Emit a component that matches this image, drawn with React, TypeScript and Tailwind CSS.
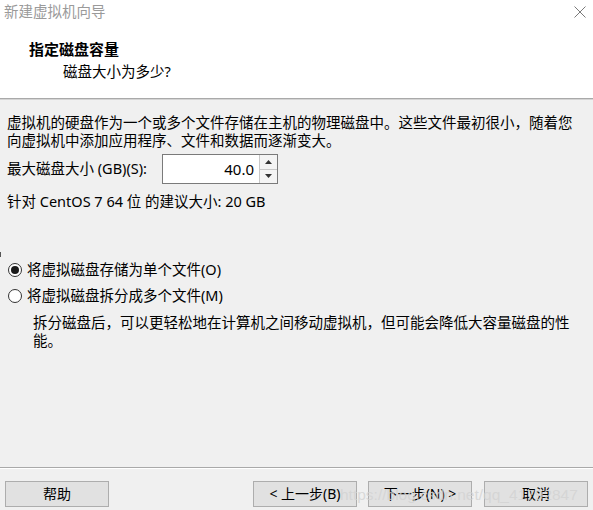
import React from 'react';

// New VM wizard: disk capacity page

const font = "font-['Noto_Sans','Noto_Sans_CJK_SC',sans-serif]";

const WizButton: React.FC<{ label: React.ReactNode; className?: string }> = ({ label, className }) => (
  <button
    className={`w-[104px] h-[26px] bg-[#e1e1e1] border border-[#adadad] text-[14px] text-black leading-none flex items-center justify-center ${className ?? ''}`}
  >
    {label}
  </button>
);

const Radio: React.FC<{ checked?: boolean; label: string }> = ({ checked, label }) => (
  <div className="flex items-center h-[22px]">
    <span className="ml-[8px] w-[14px] h-[14px] rounded-full border border-[#333] bg-white flex items-center justify-center">
      {checked && <span className="w-[8px] h-[8px] rounded-full bg-[#1a1a1a]" />}
    </span>
    <span className="ml-[5px]">{label}</span>
  </div>
);

export default function App() {
  return (
    <div className={`relative w-[593px] h-[510px] bg-[#f0f0f0] overflow-hidden flex flex-col text-[14.5px] text-black ${font}`}>
      {/* title + header */}
      <div className="h-[98px] bg-white flex flex-col">
        <div className="h-[24px] flex items-center justify-between pl-[4px] pr-[7px]">
          <span className="text-[#9a9a9a] text-[14.5px]">新建虚拟机向导</span>
          <svg width="12" height="12" viewBox="0 0 12 12" className="text-[#7a7a7a]">
            <path d="M0.5 0.5 L11.5 11.5 M11.5 0.5 L0.5 11.5" stroke="currentColor" strokeWidth="1" />
          </svg>
        </div>
        <div className="mt-[14px] pl-[29px] font-bold leading-[22px] text-[15px]">指定磁盘容量</div>
        <div className="pl-[63px] leading-[22px] text-[14.5px]">磁盘大小为多少?</div>
      </div>
      <div className="h-[1px] bg-[#a9a9a9]" />
      <div className="h-[1px] bg-[#d4d4d4]" />

      {/* body */}
      <div className="flex-1 flex flex-col px-[7px]">
        <p className="mt-[13px] leading-[18px]">
          虚拟机的硬盘作为一个或多个文件存储在主机的物理磁盘中。这些文件最初很小，随着您
          <br />
          向虚拟机中添加应用程序、文件和数据而逐渐变大。
        </p>

        <div className="mt-[5px] flex items-center h-[30px]">
          <span className="w-[155px]">最大磁盘大小 (GB)(S):</span>
          <div className="flex h-[30px] border border-[#7a7a7a] bg-white">
            <div className="w-[96px] flex items-center justify-end pr-[5px] text-[15px]">40.0</div>
            <div className="w-[18px] flex flex-col border-l border-[#c8c8c8] bg-[#f4f4f4]">
              <div className="flex-1 flex items-center justify-center border-b border-[#c8c8c8]">
                <svg width="7" height="4" viewBox="0 0 7 4"><path d="M3.5 0 L7 4 L0 4 Z" fill="#333" /></svg>
              </div>
              <div className="flex-1 flex items-center justify-center">
                <svg width="7" height="4" viewBox="0 0 7 4"><path d="M0 0 L7 0 L3.5 4 Z" fill="#333" /></svg>
              </div>
            </div>
          </div>
        </div>

        <div className="mt-[8px] leading-[18px]">针对 CentOS 7 64 位 的建议大小: 20 GB</div>

        <div className="mt-[49px] -ml-[7px]">
          <Radio checked label="将虚拟磁盘存储为单个文件(O)" />
          <div className="mt-[4px]">
            <Radio label="将虚拟磁盘拆分成多个文件(M)" />
          </div>
        </div>
        <p className="mt-[6px] pl-[26px] leading-[18px]">
          拆分磁盘后，可以更轻松地在计算机之间移动虚拟机，但可能会降低大容量磁盘的性
          <br />
          能。
        </p>
      </div>

      {/* footer */}
      <div className="h-[1px] bg-[#a9a9a9]" />
      <div className="h-[1px] bg-white" />
      <div className="mt-[12px] mb-[3px] flex items-center pl-[5px]">
        <WizButton label="帮助" />
        <WizButton label="< 上一步(B)" className="ml-[144px]" />
        <WizButton label="下一步(N) >" className="ml-[11px]" />
        <WizButton label="取消" className="ml-[12px]" />
      </div>

      {/* stray edge mark */}
      <div className="absolute left-0 top-[252px] w-[1px] h-[5px] bg-[#555]" />

      {/* watermark */}
      <div className="absolute left-[340px] top-[483px] text-[15.5px] font-['Liberation_Sans',sans-serif] text-[rgba(210,210,210,0.8)] pointer-events-none">
        https://blog.csdn.net/qq_41792847
      </div>
    </div>
  );
}
